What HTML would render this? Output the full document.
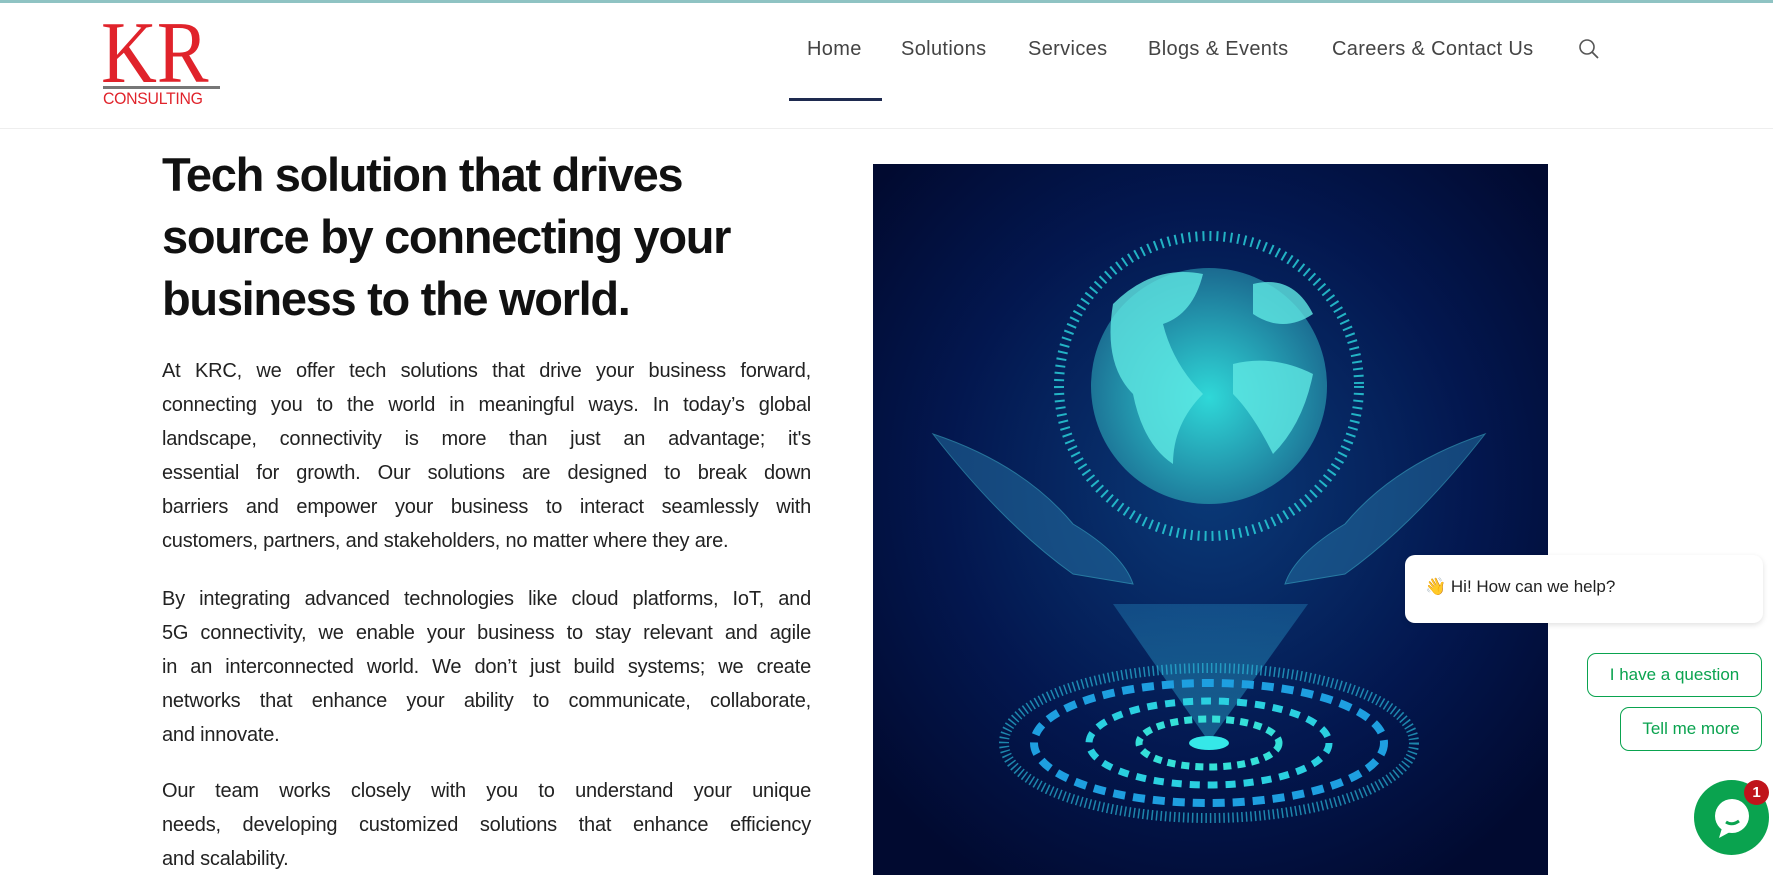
<!DOCTYPE html>
<html><head><meta charset="utf-8"><style>
*{margin:0;padding:0;box-sizing:border-box}
body{width:1773px;height:875px;overflow:hidden;background:#fff;font-family:"Liberation Sans",sans-serif;position:relative}
.topbar{position:absolute;left:0;top:0;width:100%;height:3px;background:#8fc3c3}
.hdr{position:absolute;left:0;top:3px;width:100%;height:126px;border-bottom:1px solid #eee}
.nav a{position:absolute;top:35px;font-size:20px;color:#444;text-decoration:none;letter-spacing:.35px}
.ul{position:absolute;left:789px;top:95px;width:93px;height:3px;background:#1e2a4f}
h1{position:absolute;left:162px;top:144px;width:640px;font-size:47px;line-height:62px;font-weight:bold;color:#111;letter-spacing:-1.3px}
.p{position:absolute;left:162px;width:649px;font-size:20px;line-height:34px;color:#222;letter-spacing:-.2px}
.p span{display:block;white-space:nowrap;text-align:justify;text-align-last:justify}
.p span.l{text-align-last:left}
.img{position:absolute;left:873px;top:164px;width:675px;height:711px}
.bubble{position:absolute;left:1405px;top:555px;width:358px;height:68px;background:#fff;border-radius:10px;box-shadow:0 2px 6px rgba(0,0,0,.12);font-size:17px;color:#222;padding:22px 20px}
.btn{position:absolute;border:1px solid #0aa34f;border-radius:9px;background:#fff;color:#0aa34f;font-size:17px;text-align:center;line-height:42px;height:44px}
.chat{position:absolute;left:1694px;top:780px;width:75px;height:75px;border-radius:50%;background:#0aa34f}
.badge{position:absolute;left:1744px;top:780px;width:25px;height:25px;border-radius:50%;background:#c0141b;color:#fff;font-size:15px;font-weight:bold;text-align:center;line-height:25px}
</style></head><body>
<div class="topbar"></div>
<div class="hdr">
<div style="position:absolute;left:101px;top:16px;font-family:'Liberation Serif',serif;font-size:88px;line-height:70px;color:#e0232b;transform:scaleX(.88);transform-origin:left">KR</div>
<div style="position:absolute;left:103px;top:83px;width:117px;height:3px;background:#777"></div>
<div style="position:absolute;left:103px;top:86px;font-size:17px;color:#e0232b;transform:scaleX(.93);transform-origin:left;letter-spacing:-.3px">CONSULTING</div>
<div class="nav">
<a style="left:807px">Home</a><a style="left:901px">Solutions</a><a style="left:1028px">Services</a><a style="left:1148px">Blogs &amp; Events</a><a style="left:1332px">Careers &amp; Contact Us</a>
</div>
<svg style="position:absolute;left:1578px;top:35px" width="22" height="22" viewBox="0 0 22 22"><circle cx="9" cy="9" r="7" fill="none" stroke="#555" stroke-width="1.6"/><line x1="14" y1="14" x2="20" y2="20" stroke="#555" stroke-width="1.8"/></svg>
<div class="ul"></div>
</div>
<h1>Tech solution that drives source by connecting your business to the world.</h1>
<div class="p" style="top:354px">
<span>At KRC, we offer tech solutions that drive your business forward,</span>
<span>connecting you to the world in meaningful ways. In today’s global</span>
<span>landscape, connectivity is more than just an advantage; it's</span>
<span>essential for growth. Our solutions are designed to break down</span>
<span>barriers and empower your business to interact seamlessly with</span>
<span class="l">customers, partners, and stakeholders, no matter where they are.</span>
</div>
<div class="p" style="top:582px">
<span>By integrating advanced technologies like cloud platforms, IoT, and</span>
<span>5G connectivity, we enable your business to stay relevant and agile</span>
<span>in an interconnected world. We don’t just build systems; we create</span>
<span>networks that enhance your ability to communicate, collaborate,</span>
<span class="l">and innovate.</span>
</div>
<div class="p" style="top:774px">
<span>Our team works closely with you to understand your unique</span>
<span>needs, developing customized solutions that enhance efficiency</span>
<span class="l">and scalability.</span>
</div>
<svg class="img" viewBox="0 0 675 711">
<defs>
<radialGradient id="bg" cx="50%" cy="45%" r="65%"><stop offset="0" stop-color="#0a3a78"/><stop offset=".6" stop-color="#03174f"/><stop offset="1" stop-color="#010a30"/></radialGradient>
<radialGradient id="gl" cx="50%" cy="55%" r="55%"><stop offset="0" stop-color="#2fd8d8"/><stop offset="1" stop-color="#1b6a90"/></radialGradient>
<linearGradient id="beam" x1="0" y1="0" x2="0" y2="1"><stop offset="0" stop-color="#1e6fa8" stop-opacity=".5"/><stop offset="1" stop-color="#30c0e0" stop-opacity=".4"/></linearGradient>
</defs>
<rect width="675" height="711" fill="url(#bg)"/>
<polygon points="240,440 435,440 336,578" fill="url(#beam)"/>
<ellipse cx="336" cy="579" rx="205" ry="75" fill="none" stroke="#2ab8d8" stroke-width="10" stroke-dasharray="1.5 3" opacity=".7"/>
<ellipse cx="336" cy="579" rx="175" ry="60" fill="none" stroke="#1e9fe0" stroke-width="8" stroke-dasharray="12 8"/>
<ellipse cx="336" cy="579" rx="120" ry="42" fill="none" stroke="#2ad0e0" stroke-width="7" stroke-dasharray="10 8"/>
<ellipse cx="336" cy="579" rx="70" ry="24" fill="none" stroke="#35e0d8" stroke-width="7" stroke-dasharray="8 6"/>
<ellipse cx="336" cy="579" rx="20" ry="7" fill="#35e8e8"/>
<path d="M60 270 Q150 300 200 360 Q250 390 260 420 L200 410 Q130 360 60 270Z" fill="#2a7fb0" opacity=".45" stroke="#4ee0f0" stroke-width="1"/>
<path d="M612 270 Q522 300 472 360 Q422 390 412 420 L472 410 Q542 360 612 270Z" fill="#2a7fb0" opacity=".45" stroke="#4ee0f0" stroke-width="1"/>
<circle cx="336" cy="222" r="150" fill="none" stroke="#2ad8e0" stroke-width="10" stroke-dasharray="2 5" opacity=".8"/>
<circle cx="336" cy="222" r="118" fill="url(#gl)"/>
<path d="M240 140 Q280 100 330 110 Q320 150 290 160 Q300 200 330 230 Q300 260 300 300 Q270 280 260 230 Q230 200 240 140Z M360 200 Q400 190 440 210 Q430 260 400 290 Q380 250 360 230Z M380 120 Q420 110 440 150 Q410 170 380 150Z" fill="#5fe8e4" opacity=".8"/>
</svg>
<div class="bubble">👋 Hi! How can we help?</div>
<div class="btn" style="left:1587px;top:653px;width:175px">I have a question</div>
<div class="btn" style="left:1620px;top:707px;width:142px">Tell me more</div>
<div class="chat"><svg width="75" height="75" viewBox="0 0 75 75"><circle cx="38" cy="36" r="17" fill="#fff"/><path d="M28 48 L25 58 L36 52Z" fill="#fff"/><path d="M32 42 Q38 46 45 41" stroke="#0aa34f" stroke-width="3" fill="none"/></svg></div>
<div class="badge">1</div>
</body></html>
